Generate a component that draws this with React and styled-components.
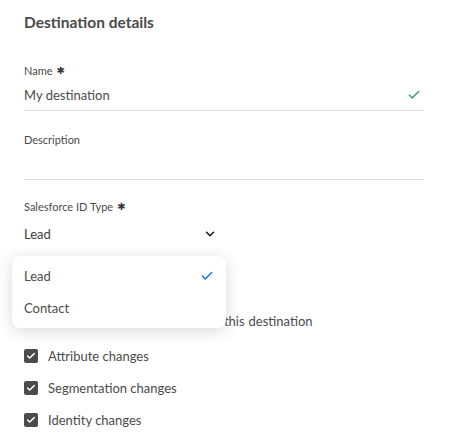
import React from 'react';
import styled, { createGlobalStyle } from 'styled-components';
import { Check, ChevronDown } from 'lucide-react';

const GlobalStyle = createGlobalStyle`
  body {
    margin: 0;
    background: #ffffff;
    font-family: Lato, "Noto Sans", sans-serif;
    color: #4b4b4b;
  }
`;

const exportOptions = ['Attribute changes', 'Segmentation changes', 'Identity changes'];

const App = () => (
  <>
    <GlobalStyle />
    <Page>
      <Heading>Destination details</Heading>

      <Field $top={31}>
        <Label>
          Name <Required>✱</Required>
        </Label>
        <TextInput>
          <span>My destination</span>
          <Check size={14} strokeWidth={2.5} color="#2d9d78" />
        </TextInput>
      </Field>

      <Field $top={21}>
        <Label>Description</Label>
        <TextInput />
      </Field>

      <Field $top={19}>
        <Label>
          Salesforce ID Type <Required>✱</Required>
        </Label>
        <Picker>
          <span>Lead</span>
          <ChevronDown size={14} strokeWidth={2.8} color="#222" />
        </Picker>
        <Menu>
          <MenuItem>
            <span>Lead</span>
            <Check size={14} strokeWidth={2.5} color="#1473e6" />
          </MenuItem>
          <MenuItem>
            <span>Contact</span>
          </MenuItem>
        </Menu>
      </Field>

      <ExportTitle>Choose which updates are sent to this destination</ExportTitle>
      <CheckList>
        {exportOptions.map(item => (
          <CheckRow key={item}>
            <Box>
              <Check size={10} strokeWidth={3.5} color="#fff" />
            </Box>
            {item}
          </CheckRow>
        ))}
      </CheckList>
    </Page>
  </>
);

const Page = styled.div`
  width: 400px;
  padding: 12px 28px 0 24px;
`;

const Heading = styled.h2`
  margin: 0;
  font-size: 15.5px;
  line-height: 20px;
  font-weight: 700;
  color: #4b4b4b;
`;

const Field = styled.div`
  position: relative;
  margin-top: ${({ $top }) => $top}px;
`;

const Label = styled.div`
  display: flex;
  align-items: center;
  gap: 4px;
  height: 14px;
  margin-bottom: 2px;
  font-size: 11px;
  color: #4b4b4b;
`;

const Required = styled.span`
  font-family: "DejaVu Sans", sans-serif;
  font-size: 10px;
  color: #3a3a3a;
`;

const TextInput = styled.div`
  display: flex;
  align-items: center;
  justify-content: space-between;
  height: 31px;
  padding-right: 3px;
  border-bottom: 1px solid #e1e1e1;
  font-size: 13px;
  color: #4b4b4b;
`;

const Picker = styled.div`
  display: flex;
  align-items: center;
  justify-content: space-between;
  width: 194px;
  height: 37px;
  padding-right: 1px;
  box-sizing: border-box;
  font-size: 13px;
  color: #3e3e3e;
`;

const Menu = styled.div`
  position: absolute;
  top: 57px;
  left: -12px;
  z-index: 2;
  width: 214px;
  height: 72px;
  padding-top: 4px;
  box-sizing: border-box;
  background: #fff;
  border-radius: 8px;
  box-shadow: 0 3px 16px rgba(0, 0, 0, 0.15);
`;

const MenuItem = styled.div`
  display: flex;
  align-items: center;
  justify-content: space-between;
  height: 32px;
  padding: 0 12px;
  font-size: 13px;
  color: #4b4b4b;
`;

const ExportTitle = styled.div`
  margin-top: 60px;
  font-size: 13px;
  line-height: 18px;
  word-spacing: 0.6px;
  color: #4b4b4b;
`;

const CheckList = styled.div`
  display: flex;
  flex-direction: column;
  margin-top: 10px;
`;

const CheckRow = styled.div`
  display: flex;
  align-items: center;
  gap: 10px;
  height: 32px;
  font-size: 13px;
  color: #4b4b4b;
`;

const Box = styled.span`
  display: flex;
  align-items: center;
  justify-content: center;
  width: 14px;
  height: 14px;
  border-radius: 2px;
  background: #4b4b4b;
`;

export default App;
